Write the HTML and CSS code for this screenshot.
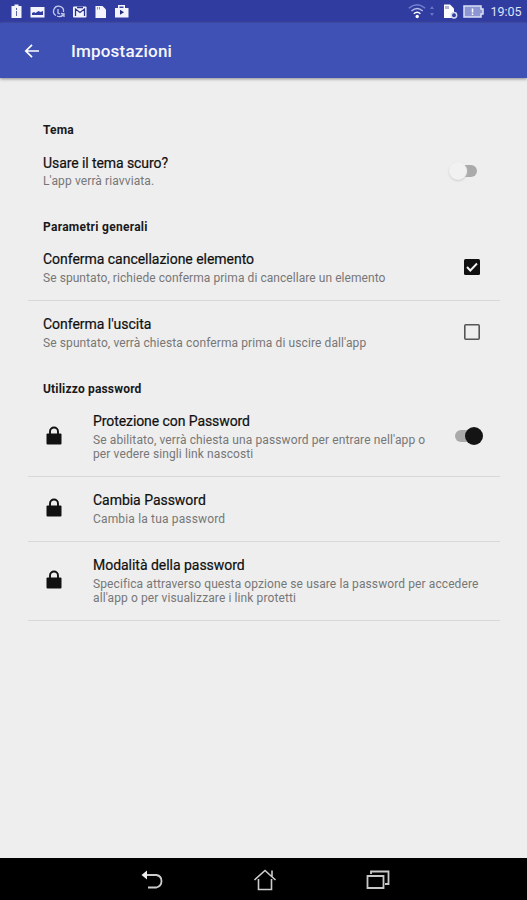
FILE: index.html
```html
<!DOCTYPE html>
<html lang="it">
<head>
<meta charset="utf-8">
<title>Impostazioni</title>
<link rel="stylesheet" href="styles.css">
</head>
<body>
<header class="status">
  <svg class="status-left" width="136" height="24" viewBox="0 0 136 24" fill="#f4f5fc">
    <path d="M14.500 4.500h4v1.500h3v12h-10v-12h3z"/><path d="M16 8h1v2h-1zm0 3h1v5h-1z" fill="#5961a8"/>
    <path fill-rule="evenodd" d="M30.500 7h14v10.500h-14zm1.500 8h11v-4l-2.500 1-2-1-3 2-1.500-1-2 1z"/>
    <g fill="none" stroke="#c4cbea" stroke-width="1.300"><path d="M56 15.500A5 5 0 1 1 63.500 12M58 9v4l2 1M57 16q4 2 7-2l-3-.5M64 14v3"/></g>
    <rect x="73" y="6.500" width="13.500" height="11" rx="1"/><path d="M75.500 16V9l4.500 3.500L84.500 9v7M77 7.500h6" fill="none" stroke="#28338f" stroke-width="1.300"/>
    <path d="M95.500 6h7l3.500 3.500V18H95.500z"/><path d="M97.500 7v2.500M99.500 7v2.500" stroke="#8990c9"/>
    <path fill-rule="evenodd" d="M115 8h3V5h7v3h3.500v9.500H115zm4.500 0h4V6.500h-4z"/><path d="M120 9.800l4 2.500-4 2.500z" fill="#202b80"/>
  </svg>
  <svg class="status-right" width="76" height="24" viewBox="410 0 76 24">
    <g fill="none" stroke-width="1.500"><path d="M408.800 8.200q8.200-7 16.400 0" stroke="#7482cf"/><path d="M411.500 11q5.700-5 11.200 0" stroke="#b6beec"/><path d="M413.800 13.800q3.400-3 6.600 0" stroke="#fff"/></g><circle cx="417.200" cy="16.500" r="1.700" fill="#fff"/>
    <path d="M430 9l2-3 2 3zm0 4l2 3 2-3z" fill="#6876c5"/>
    <path d="M444 4.500h6l4 4V18h-10z" fill="#fff"/><path d="M446 6v3m2-3v3" stroke="#626bad"/><circle cx="454" cy="15.200" r="2.700" fill="#323ea1" stroke="#d5daf4" stroke-width="1.500"/>
    <path d="M464 6h17v3h2v5h-2v3h-17z" fill="#8b96d3" stroke="#dce1f5" stroke-width="1.500"/><path d="M472.500 8.500v4m0 1v1.500" stroke="#fff" stroke-width="1.500"/>
  </svg>
  <time class="clock">19:05</time>
</header>
<div class="appbar">
  <svg class="back" width="16" height="16" viewBox="0 0 16 16"><path d="M15 8H2M8 1.800L1.800 8 8 14.200" fill="none" stroke="#fff" stroke-width="1.700"/></svg>
  <h1>Impostazioni</h1>
</div>
<main>
  <h2 class="h-tema"><span>Tema</span></h2>
  <section class="row plain theme">
    <div class="text"><h3 class="t1">Usare il tema scuro?</h3><p class="p1">L'app verrà riavviata.</p></div>
    <div class="switch off"><i></i></div>
  </section>
  <h2 class="h-gen"><span>Parametri generali</span></h2>
  <section class="row">
    <div class="text"><h3 class="t2">Conferma cancellazione elemento</h3><p class="p2">Se spuntato, richiede conferma prima di cancellare un elemento</p></div>
    <svg class="check" width="18" height="18" viewBox="0 0 18 18"><rect x="1" y="1" width="16" height="16" rx="1.500" fill="#101010"/><path d="M4 9l3.300 3.500L14 5.500" fill="none" stroke="#f4f4f4" stroke-width="1.900"/></svg>
  </section>
  <section class="row plain">
    <div class="text"><h3 class="t3">Conferma l'uscita</h3><p class="p3">Se spuntato, verrà chiesta conferma prima di uscire dall'app</p></div>
    <svg class="check" width="18" height="18" viewBox="0 0 18 18"><rect x="1.800" y="1.800" width="14.400" height="14.400" rx="1" fill="none" stroke="#555" stroke-width="1.600"/></svg>
  </section>
  <h2 class="h-pass"><span>Utilizzo password</span></h2>
  <section class="row tall">
    <svg class="lock" width="16" height="20" viewBox="0 0 16 20"><path d="M4 9V5.500a4 4 0 0 1 8 0V9" fill="none" stroke="#111" stroke-width="1.900"/><rect x=".5" y="7.500" width="15" height="11" rx="1" fill="#111"/></svg>
    <div class="text"><h3 class="t4">Protezione con Password</h3><p class="p4">Se abilitato, verrà chiesta una password per entrare nell'app o<br>per vedere singli link nascosti</p></div>
    <div class="switch on"><i></i></div>
  </section>
  <section class="row">
    <svg class="lock" width="16" height="20" viewBox="0 0 16 20"><path d="M4 9V5.500a4 4 0 0 1 8 0V9" fill="none" stroke="#111" stroke-width="1.900"/><rect x=".5" y="7.500" width="15" height="11" rx="1" fill="#111"/></svg>
    <div class="text"><h3 class="t5">Cambia Password</h3><p class="p5">Cambia la tua password</p></div>
  </section>
  <section class="row tall">
    <svg class="lock" width="16" height="20" viewBox="0 0 16 20"><path d="M4 9V5.500a4 4 0 0 1 8 0V9" fill="none" stroke="#111" stroke-width="1.900"/><rect x=".5" y="7.500" width="15" height="11" rx="1" fill="#111"/></svg>
    <div class="text"><h3 class="t6">Modalità della password</h3><p class="p6">Specifica attraverso questa opzione se usare la password per accedere<br>all'app o per visualizzare i link protetti</p></div>
  </section>
</main>
<nav>
  <svg width="24" height="24" viewBox="0 0 24 24"><path d="M6 7h10.500q5 1 5 6t-5 6.500H8" fill="none" stroke="#ccc" stroke-width="1.800"/><path d="M1.500 7L7 2.500v9z" fill="#eee"/></svg>
  <svg width="24" height="24" viewBox="0 0 24 24" fill="none" stroke="#ccc" stroke-width="1.600"><path d="M1.500 12L12 2.500 22.500 12M19 8.500V2.500M5.500 11v10.500h13V11"/></svg>
  <svg width="24" height="24" viewBox="0 0 24 24" fill="none" stroke="#c8c8c8"><path d="M1.500 8h16v12h-16z" stroke-width="1.800"/><path d="M5 6V3.500h17.500V16H19" stroke-width="1.800"/></svg>
</nav>
</body>
</html>
```
FILE: styles.css
```css
* { box-sizing: border-box; margin: 0; padding: 0; }
body { width: 527px; height: 900px; display: flex; flex-direction: column; overflow: hidden; background: #eee; font-family: Roboto, sans-serif; color: #111; }
svg { display: block; flex: none; overflow: visible; }
.status { height: 23px; background: #303ca0; display: flex; flex: none; }
.status-right { margin-left: 274px; }
.clock { margin-left: 4.5px; font-size: 12.5px; line-height: 24px; color: #dfe3f7; }
.appbar { height: 55px; flex: none; background: #3f51b5; display: flex; align-items: center; padding-left: 24px; box-shadow: 0 1px 3px #888; }
.back { margin-top: 1px; }
h1 { margin-left: 31px; font-size: 17px; font-weight: 500; line-height: 24px; letter-spacing: .2px; color: #f5f6fc; margin-top: 1px; }
main { flex: 1; padding: 30px 27px 0 28px; }
h2 { height: 31px; padding: 14px 0 0 15px; font-size: 12px; line-height: 16px; font-weight: 700; letter-spacing: .18px; color: #191919; }
.h-gen { letter-spacing: .28px; }
.h-pass { height: 32px; padding-top: 15px; }
.row { height: 65px; display: flex; padding-left: 15px; border-bottom: 1px solid #d8d8d8; }
.row.theme { height: 66px; }
.row.tall { height: 79px; }
.row.plain { border-bottom-color: transparent; }
.text { padding-top: 14px; white-space: nowrap; }
.theme .text { padding-top: 15px; }
h3 { font-size: 14px; line-height: 18px; font-weight: 400; color: #101010; -webkit-text-stroke: .2px #101010; letter-spacing: -.03px; width: max-content; }
.t1, .t4 { letter-spacing: -.08px; }
p { font-size: 12px; line-height: 14px; letter-spacing: .11px; color: #777; margin-top: 2px; width: max-content; }
.p2 { letter-spacing: .06px; margin-top: 3px; }
.p3, .p4, .p5, .p6 { margin-top: 3px; }
.p3, .p6 { letter-spacing: .1px; }
.p5 { letter-spacing: .16px; }
.lock { align-self: center; margin: 0 31px 2px 3px; }
.check { margin: 22px 19px 0 auto; }
.switch { width: 28px; height: 18px; margin: 29px 17px 0 auto; position: relative; }
.switch.off { margin: 23px 23px 0 auto; }
.switch::before { content: ""; display: block; width: 24px; height: 12px; margin-top: 3px; border-radius: 6px; background: #aaa; }
.switch.off::before { margin-left: 4px; }
.switch i { position: absolute; top: 0; width: 18px; height: 18px; border-radius: 50%; }
.switch.off i { left: 0; background: #f1f1f1; box-shadow: 0 1px 2px #ccc; }
.switch.on i { right: 0; background: #141414; }
nav { height: 42px; flex: none; display: flex; gap: 89px; padding: 10px 0 0 140px; background: #000; }
```
